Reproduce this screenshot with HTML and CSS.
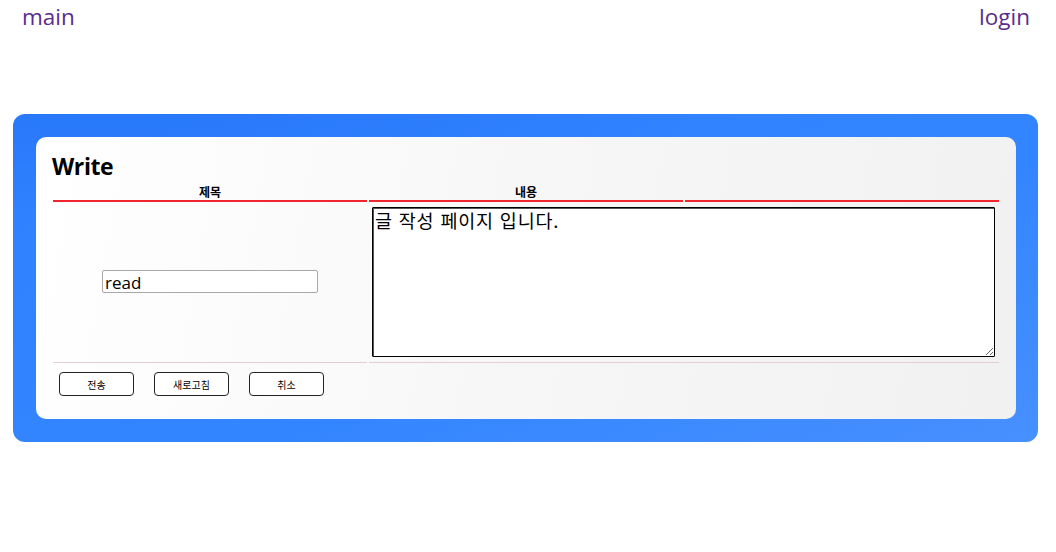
FILE: index.html
```html
<!DOCTYPE html>
<html lang="ko">
<head>
<meta charset="utf-8">
<title>Write</title>
<link rel="stylesheet" href="styles.css">
</head>
<body>
<header class="topbar">
  <a class="nav-link" href="#">main</a>
  <a class="nav-link" href="#">login</a>
</header>
<main class="frame">
  <section class="panel">
    <h2 class="title">Write</h2>
    <table class="write-table">
      <colgroup><col><col><col></colgroup>
      <thead>
        <tr><th>제목</th><th>내용</th><th></th></tr>
      </thead>
      <tbody>
        <tr class="content-row">
          <td class="title-cell"><input class="title-input" type="text" value="read"></td>
          <td colspan="2" class="body-cell"><textarea class="body-input">글 작성 페이지 입니다.</textarea></td>
        </tr>
        <tr class="action-row">
          <td class="actions">
            <button class="btn" type="button">전송</button><button class="btn" type="button">새로고침</button><button class="btn" type="button">취소</button>
          </td>
          <td colspan="2"></td>
        </tr>
      </tbody>
    </table>
  </section>
</main>
</body>
</html>
```
FILE: styles.css
```css
html, body {
  margin: 0;
  padding: 0;
  background: #fff;
}
body {
  font-family: "Open Sans", "Noto Sans CJK KR", sans-serif;
  color: #000;
}
.topbar {
  display: flex;
  justify-content: space-between;
  align-items: flex-start;
  height: 36px;
  padding: 0 26px 0 22px;
}
.nav-link {
  font-size: 22.5px;
  line-height: 34px;
  color: #5b2b8c;
  text-decoration: none;
}
.frame {
  margin: 78px 18px 0 13px;
  padding: 23px 22px 23px 23px;
  border-radius: 12px;
  background:
    radial-gradient(ellipse 60% 30% at 10% 0%, rgba(40,120,250,1) 0%, rgba(40,120,250,0) 100%),
    linear-gradient(160deg, #2f80ff 0%, #3385ff 60%, #4790ff 100%);
}
.panel {
  border-radius: 10px;
  padding: 14px 15px 19px 15px;
  background: linear-gradient(100deg, #ffffff 0%, #f6f6f6 55%, #f1f1f1 100%);
}
.title {
  margin: 0 0 2px 1px;
  font-size: 23px;
  line-height: 30px;
  letter-spacing: -0.4px;
  font-weight: 700;
}
.write-table {
  width: 100%;
  table-layout: fixed;
  border-spacing: 2px;
}
.write-table th {
  font-size: 12px;
  line-height: 15px;
  font-weight: 700;
  padding: 0;
  border-bottom: 2px solid #f0262f;
}
.write-table td {
  padding: 1px;
}
.title-cell {
  text-align: center;
  vertical-align: middle;
}
.title-input {
  box-sizing: border-box;
  width: 216px;
  height: 23px;
  margin: 0;
  padding: 1px 2px 0;
  border: 1px solid #a8a8a8;
  border-radius: 2px;
  background: #fff;
  font-family: "Open Sans", "Noto Sans CJK KR", sans-serif;
  font-size: 17px;
  color: #000;
}
.body-cell {
  vertical-align: top;
}
.body-input {
  display: block;
  box-sizing: border-box;
  width: 623px;
  height: 150px;
  margin: 2px 0 2px 2px;
  padding: 1px 2px;
  border: 1px solid #000;
  box-shadow: inset 1px 1px 0 #555;
  border-radius: 1px;
  background: #fff;
  font-family: "Noto Sans CJK KR", sans-serif;
  font-size: 18.5px;
  line-height: 22px;
  letter-spacing: 0.8px;
  color: #000;
  resize: both;
}
.action-row td {
  border-top: 1px solid #e3cfd3;
  padding: 9px 0 2px 6px;
}
.actions {
  display: flex;
  gap: 20px;
}
.btn {
  box-sizing: border-box;
  width: 75px;
  height: 24px;
  margin: 0;
  padding: 0;
  border: 1px solid #222;
  border-radius: 4px;
  background: #fff;
  font-family: "Noto Sans CJK KR", sans-serif;
  font-size: 10px;
  color: #000;
}
```
